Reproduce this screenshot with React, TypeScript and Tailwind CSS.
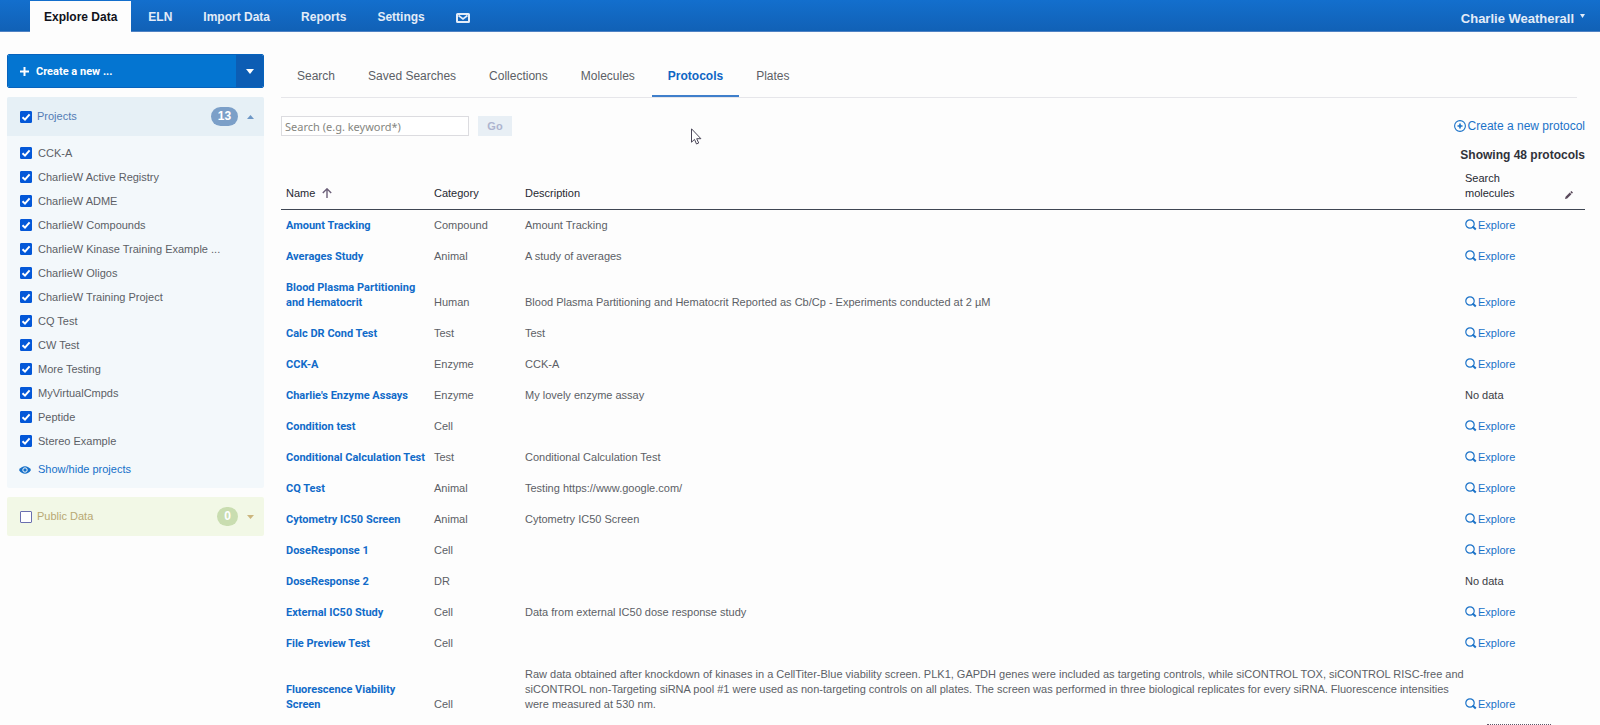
import { useState } from "react";

interface Protocol {
  name: string;
  category: string;
  description?: string;
  noData?: boolean;
}

const navItems = ["Explore Data", "ELN", "Import Data", "Reports", "Settings"];

const tabs = [
  "Search",
  "Saved Searches",
  "Collections",
  "Molecules",
  "Protocols",
  "Plates",
];

const projects = [
  "CCK-A",
  "CharlieW Active Registry",
  "CharlieW ADME",
  "CharlieW Compounds",
  "CharlieW Kinase Training Example ...",
  "CharlieW Oligos",
  "CharlieW Training Project",
  "CQ Test",
  "CW Test",
  "More Testing",
  "MyVirtualCmpds",
  "Peptide",
  "Stereo Example",
];

const protocols: Protocol[] = [
  { name: "Amount Tracking", category: "Compound", description: "Amount Tracking" },
  { name: "Averages Study", category: "Animal", description: "A study of averages" },
  {
    name: "Blood Plasma Partitioning and Hematocrit",
    category: "Human",
    description:
      "Blood Plasma Partitioning and Hematocrit Reported as Cb/Cp - Experiments conducted at 2 µM",
  },
  { name: "Calc DR Cond Test", category: "Test", description: "Test" },
  { name: "CCK-A", category: "Enzyme", description: "CCK-A" },
  {
    name: "Charlie's Enzyme Assays",
    category: "Enzyme",
    description: "My lovely enzyme assay",
    noData: true,
  },
  { name: "Condition test", category: "Cell" },
  {
    name: "Conditional Calculation Test",
    category: "Test",
    description: "Conditional Calculation Test",
  },
  { name: "CQ Test", category: "Animal", description: "Testing https://www.google.com/" },
  { name: "Cytometry IC50 Screen", category: "Animal", description: "Cytometry IC50 Screen" },
  { name: "DoseResponse 1", category: "Cell" },
  { name: "DoseResponse 2", category: "DR", noData: true },
  {
    name: "External IC50 Study",
    category: "Cell",
    description: "Data from external IC50 dose response study",
  },
  { name: "File Preview Test", category: "Cell" },
  {
    name: "Fluorescence Viability Screen",
    category: "Cell",
    description:
      "Raw data obtained after knockdown of kinases in a CellTiter-Blue viability screen. PLK1, GAPDH genes were included as targeting controls, while siCONTROL TOX, siCONTROL RISC-free and siCONTROL non-Targeting siRNA pool #1 were used as non-targeting controls on all plates. The screen was performed in three biological replicates for every siRNA. Fluorescence intensities were measured at 530 nm.",
  },
];

function Checkbox({
  id,
  checked,
  onChange,
}: {
  id: string;
  checked: boolean;
  onChange: () => void;
}) {
  return (
    <span className="grid size-3 shrink-0">
      <input
        id={id}
        type="checkbox"
        checked={checked}
        onChange={onChange}
        className="col-start-1 row-start-1 size-3 appearance-none rounded-[1px] border border-[#6a6fb0] bg-white checked:border-[#0458d8] checked:bg-[#0458d8]"
      />
      {checked && (
        <svg
          viewBox="0 0 12 12"
          className="pointer-events-none col-start-1 row-start-1 size-3"
          fill="none"
          stroke="#fff"
          strokeWidth="2"
        >
          <path d="M2.500 6.200 5 8.600 9.600 3.400" />
        </svg>
      )}
    </span>
  );
}

function SearchIcon() {
  return (
    <svg viewBox="0 0 12 12" className="mb-px size-3" fill="none" stroke="currentColor">
      <circle cx="5" cy="5" r="4.200" strokeWidth="1.200" />
      <path d="M7.600 7.600 10.800 10.600" strokeWidth="2" />
    </svg>
  );
}

export default function App() {
  const [activeTab, setActiveTab] = useState("Protocols");
  const [selected, setSelected] = useState<string[]>(projects);
  const [publicData, setPublicData] = useState(false);
  const [keyword, setKeyword] = useState("");

  const toggleProject = (name: string) => {
    setSelected((prev) =>
      prev.includes(name) ? prev.filter((p) => p !== name) : [...prev, name]
    );
  };

  const allSelected = selected.length === projects.length;

  return (
    <div className="relative min-h-screen overflow-hidden bg-[#fdfdfd] font-['Liberation_Sans',Arial,sans-serif] text-[11px] leading-[15px] text-[#5c5f66]">
      <header className="flex h-8 items-end justify-between border-b border-[#4f82c4] bg-linear-to-b from-[#136fcd] to-[#1161b6] pr-[15px] pl-[30px]">
        <nav className="-mb-px flex gap-[3px] text-[12px] font-bold text-[#e3ecf8]">
          {navItems.map((item, i) => (
            <a
              key={item}
              href="#"
              className={
                i === 0
                  ? "flex h-[31px] items-center bg-[#fdfdfd] px-[14px] pt-[2px] text-[#10131c]"
                  : "flex h-[31px] items-center px-[14px] pt-[2px]"
              }
            >
              {item}
            </a>
          ))}
          <a href="#" aria-label="Messages" className="flex h-[31px] items-center px-[14px] pt-[2px]">
            <svg viewBox="0 0 14 10" className="h-[10px] w-[14px]" fill="none" stroke="currentColor" strokeWidth="2">
              <rect x="1" y="1" width="12" height="8" rx="0.500" />
              <path d="M2.500 2.500 7 6l4.500-3.500" strokeWidth="1.600" />
            </svg>
          </a>
        </nav>
        <button type="button" className="flex h-[26px] items-center gap-[6px] text-[13px] font-bold text-[#e3ecf8]">
          Charlie Weatherall
          <svg viewBox="0 0 5 4" className="mb-1 h-1 w-[5px]" fill="currentColor">
            <path d="M0 0h5L2.500 4z" />
          </svg>
        </button>
      </header>

      <div className="flex pt-[22px]">
        <aside className="ml-[7px] w-[257px] shrink-0">
          <div className="flex h-[34px] overflow-hidden rounded-xs border border-[#0763bd] font-bold text-white">
            <button type="button" className="flex flex-1 items-center gap-[7px] bg-[#0475d1] pl-3 font-['Roboto',sans-serif]">
              <svg viewBox="0 0 9 9" className="size-[9px]" fill="none" stroke="currentColor" strokeWidth="2">
                <path d="M4.500 0v9M0 4.500h9" />
              </svg>
              Create a new ...
            </button>
            <button type="button" aria-label="More options" className="flex w-[27px] items-center justify-center bg-[#0c5db4]">
              <svg viewBox="0 0 8 5" className="h-[5px] w-2" fill="currentColor">
                <path d="M0 0h8L4 5z" />
              </svg>
            </button>
          </div>

          <section className="mt-[9px] rounded-xs bg-[#f3f8fb]">
            <div className="flex h-[39px] items-center rounded-t-xs bg-[#e6f0f6] pr-[10px] pl-[13px]">
              <Checkbox
                id="all-projects"
                checked={allSelected}
                onChange={() => setSelected(allSelected ? [] : projects)}
              />
              <label htmlFor="all-projects" className="ml-[5px] flex-1 text-[#527cb5]">
                Projects
              </label>
              <span className="flex h-[19px] w-[27px] items-center justify-center rounded-full bg-[#7b9fc8] text-[12px] font-bold text-white">
                {selected.length}
              </span>
              <svg viewBox="0 0 7 4" className="ml-[9px] h-1 w-[7px]" fill="#6d97c6">
                <path d="M0 4h7L3.500 0z" />
              </svg>
            </div>
            <ul className="pt-[5px]">
              {projects.map((name) => (
                <li key={name} className="flex h-6 items-center gap-[6px] pl-[13px]">
                  <Checkbox
                    id={name}
                    checked={selected.includes(name)}
                    onChange={() => toggleProject(name)}
                  />
                  <label htmlFor={name}>{name}</label>
                </li>
              ))}
            </ul>
            <a href="#" className="flex h-[35px] items-center gap-[7px] pb-[2px] pl-3 text-[#1670c9]">
              <svg viewBox="0 0 12 8" className="h-2 w-3" fill="none" stroke="currentColor">
                <path d="M0 4C3-1 9-1 12 4 9 9 3 9 0 4z" fill="currentColor" stroke="none" />
                <circle cx="6" cy="4" r="2.200" stroke="#f3f8fb" strokeWidth="1" />
              </svg>
              Show/hide projects
            </a>
          </section>

          <section className="mt-[9px] flex h-[39px] items-center rounded-xs bg-[#f2f8e6] pr-[10px] pl-[13px]">
            <Checkbox
              id="public-data"
              checked={publicData}
              onChange={() => setPublicData(!publicData)}
            />
            <label htmlFor="public-data" className="ml-[5px] flex-1 text-[#b8a873]">
              Public Data
            </label>
            <span className="flex h-[19px] w-[21px] items-center justify-center rounded-full bg-[#c9ddb0] text-[12px] font-bold text-white">
              0
            </span>
            <svg viewBox="0 0 7 4" className="ml-[9px] h-1 w-[7px]" fill="#ccb67e">
              <path d="M0 0h7L3.500 4z" />
            </svg>
          </section>
        </aside>

        <main className="mr-[15px] ml-[17px] min-w-0 flex-1">
          <nav className="mr-2 flex h-[44px] items-end gap-px border-b border-[#e6e6ea] text-[12px]">
            {tabs.map((tab) => (
              <button
                key={tab}
                type="button"
                onClick={() => setActiveTab(tab)}
                className={
                  tab === activeTab
                    ? "h-[43px] border-b-2 border-[#3f7fcb] px-4 pt-[3px] font-bold text-[#0f66c4]"
                    : "h-[43px] border-b-2 border-transparent px-4 pt-[3px]"
                }
              >
                {tab}
              </button>
            ))}
          </nav>

          <div className="flex items-start justify-between pt-[18px]">
            <form className="flex gap-[9px]" onSubmit={(e) => e.preventDefault()}>
              <input
                type="text"
                aria-label="Search protocols"
                value={keyword}
                onChange={(e) => setKeyword(e.target.value)}
                placeholder="Search (e.g. keyword*)"
                className="h-5 w-[188px] border border-[#dcdce0] bg-white px-[3px] font-['Noto_Sans',sans-serif] placeholder:text-[#85867f]"
              />
              <button type="submit" className="h-5 w-[34px] bg-[#e8eff5] font-bold text-[#adb4cf]">
                Go
              </button>
            </form>
            <div className="text-right text-[12px]">
              <a href="#" className="flex h-5 items-center justify-end gap-[2px] text-[#1b72c8]">
                <svg viewBox="0 0 12 12" className="size-3" fill="none" stroke="currentColor">
                  <circle cx="6" cy="6" r="5.400" strokeWidth="1.100" />
                  <path d="M6 3.500v5M3.500 6h5" strokeWidth="1.600" />
                </svg>
                Create a new protocol
              </a>
              <p className="mt-3 h-5 font-bold text-[#30323a]">Showing 48 protocols</p>
            </div>
          </div>

          <table className="mt-[3px] w-full table-fixed border-collapse text-left">
            <thead className="text-[#262932]">
              <tr className="border-b border-[#3f4653] align-bottom">
                <th className="w-[148px] pb-2 pl-[5px] font-normal">
                  <span className="flex items-center gap-[7px]">
                    Name
                    <svg viewBox="0 0 10 10" className="mb-[2px] size-[10px]" fill="none" stroke="#6b5f78" strokeWidth="1.400">
                      <path d="M5 10V1M0.800 5 5 0.800 9.200 5" />
                    </svg>
                  </span>
                </th>
                <th className="w-[91px] pb-2 pl-[5px] font-normal">Category</th>
                <th className="pb-2 pl-[5px] font-normal">Description</th>
                <th className="w-[120px] pb-2 font-normal">
                  <span className="flex items-end justify-between pr-3">
                    <span className="w-14">Search molecules</span>
                    <svg viewBox="0 0 8 8" className="mb-[2px] size-2" fill="#5a4a5c">
                      <path d="M0 8l.600-2.200L4.800 1.600l1.600 1.600L2.200 7.400zM5.300 1.100 6.400 0 8 1.600 6.900 2.700z" />
                    </svg>
                  </span>
                </th>
              </tr>
            </thead>
            <tbody>
              {protocols.map((protocol) => (
                <tr key={protocol.name} className="align-bottom">
                  <td className="py-2 pl-[5px] font-['Roboto',sans-serif] font-bold">
                    <a href="#" className="text-[#116bc9]">
                      {protocol.name}
                    </a>
                  </td>
                  <td className="py-2 pl-[5px]">{protocol.category}</td>
                  <td className="py-2 pl-[5px]">{protocol.description}</td>
                  <td className="py-2">
                    {protocol.noData ? (
                      <span className="text-[#3a3c44]">No data</span>
                    ) : (
                      <a href="#" className="flex items-center gap-px text-[#1b72c8]">
                        <SearchIcon />
                        Explore
                      </a>
                    )}
                  </td>
                </tr>
              ))}
            </tbody>
          </table>
        </main>
      </div>

      {/* top edge of the tooltip under the fold */}
      <div className="absolute right-[49px] bottom-0 w-16 border-t border-dotted border-[#5f5568]" />

      {/* mouse pointer */}
      <svg
        viewBox="0 0 11 17"
        className="pointer-events-none absolute top-32 left-[691px] h-[17px] w-[11px]"
        fill="#fff"
        stroke="#4a4658"
      >
        <path d="M.500.800v13.400l3-2.800 2 4.600 2.200-1-2-4.300h4.200z" />
      </svg>
    </div>
  );
}
